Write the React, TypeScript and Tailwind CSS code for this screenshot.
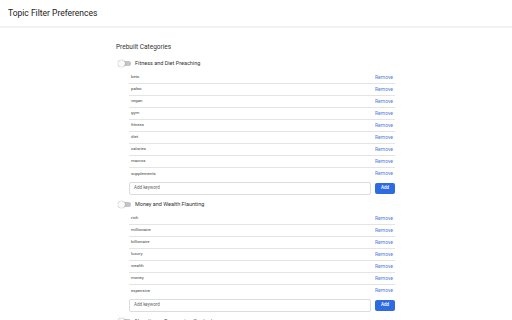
import React from "react";

type Category = {
  name: string;
  keywords: string[];
};

const categories: Category[] = [
  {
    name: "Fitness and Diet Preaching",
    keywords: ["keto", "paleo", "vegan", "gym", "fitness", "diet", "calories", "macros", "supplements"],
  },
  {
    name: "Money and Wealth Flaunting",
    keywords: ["rich", "millionaire", "billionaire", "luxury", "wealth", "money", "expensive"],
  },
  {
    name: "Negative or Depressing Content",
    keywords: ["sad", "depressing"],
  },
];

function Toggle() {
  return (
    <div className="relative w-[13px] h-[9px] flex items-center shrink-0">
      <div className="w-[11px] h-[5px] ml-[2px] rounded-full bg-[#c4c4c4]" />
      <div className="absolute left-0 top-[1px] w-[7px] h-[7px] rounded-full bg-[#fafafa] shadow-[0_0_1px_rgba(0,0,0,0.55)]" />
    </div>
  );
}

function CategoryBlock({ cat }: { cat: Category }) {
  return (
    <div className="flex flex-col">
      <div className="flex items-center gap-[4px] h-[12px] mt-[3px] mb-[3px] pl-[2px]">
        <Toggle />
        <span className="text-[5.5px] text-[#333]">{cat.name}</span>
      </div>
      <div className="ml-[13px] flex flex-col divide-y divide-[#e4e4e4]">
        {cat.keywords.map((k) => (
          <div key={k} className="h-[12px] flex items-center justify-between pl-[2px] pr-[2px]">
            <span className="text-[4.3px] text-[#444]">{k}</span>
            <span className="text-[5px] text-[#5080e0]">Remove</span>
          </div>
        ))}
      </div>
      <div className="ml-[13px] mt-[2px] flex items-center gap-[4px]">
        <div className="flex-1 h-[13px] border border-[#dcdcdc] rounded-[2px] flex items-center px-[4px]">
          <span className="text-[4.5px] text-[#666]">Add keyword</span>
        </div>
        <div className="w-[20px] h-[11px] rounded-[2px] bg-[#2f6be0] flex items-center justify-center">
          <span className="text-[4.5px] text-white font-medium">Add</span>
        </div>
      </div>
    </div>
  );
}

export default function App() {
  return (
    <div className="w-[512px] h-[320px] overflow-hidden bg-white font-['Roboto',sans-serif]">
      <div className="h-[28px] flex items-center px-[8px] border-b-2 border-[#f2f2f2]">
        <h1 className="text-[8.5px] text-[#222]">Topic Filter Preferences</h1>
      </div>
      <div className="w-[279px] ml-[116px] mt-[15px]">
        <h2 className="text-[6.5px] text-[#333] h-[9px] leading-[9px] mb-[2px]">Prebuilt Categories</h2>
        {categories.map((c) => (
          <CategoryBlock key={c.name} cat={c} />
        ))}
      </div>
    </div>
  );
}
